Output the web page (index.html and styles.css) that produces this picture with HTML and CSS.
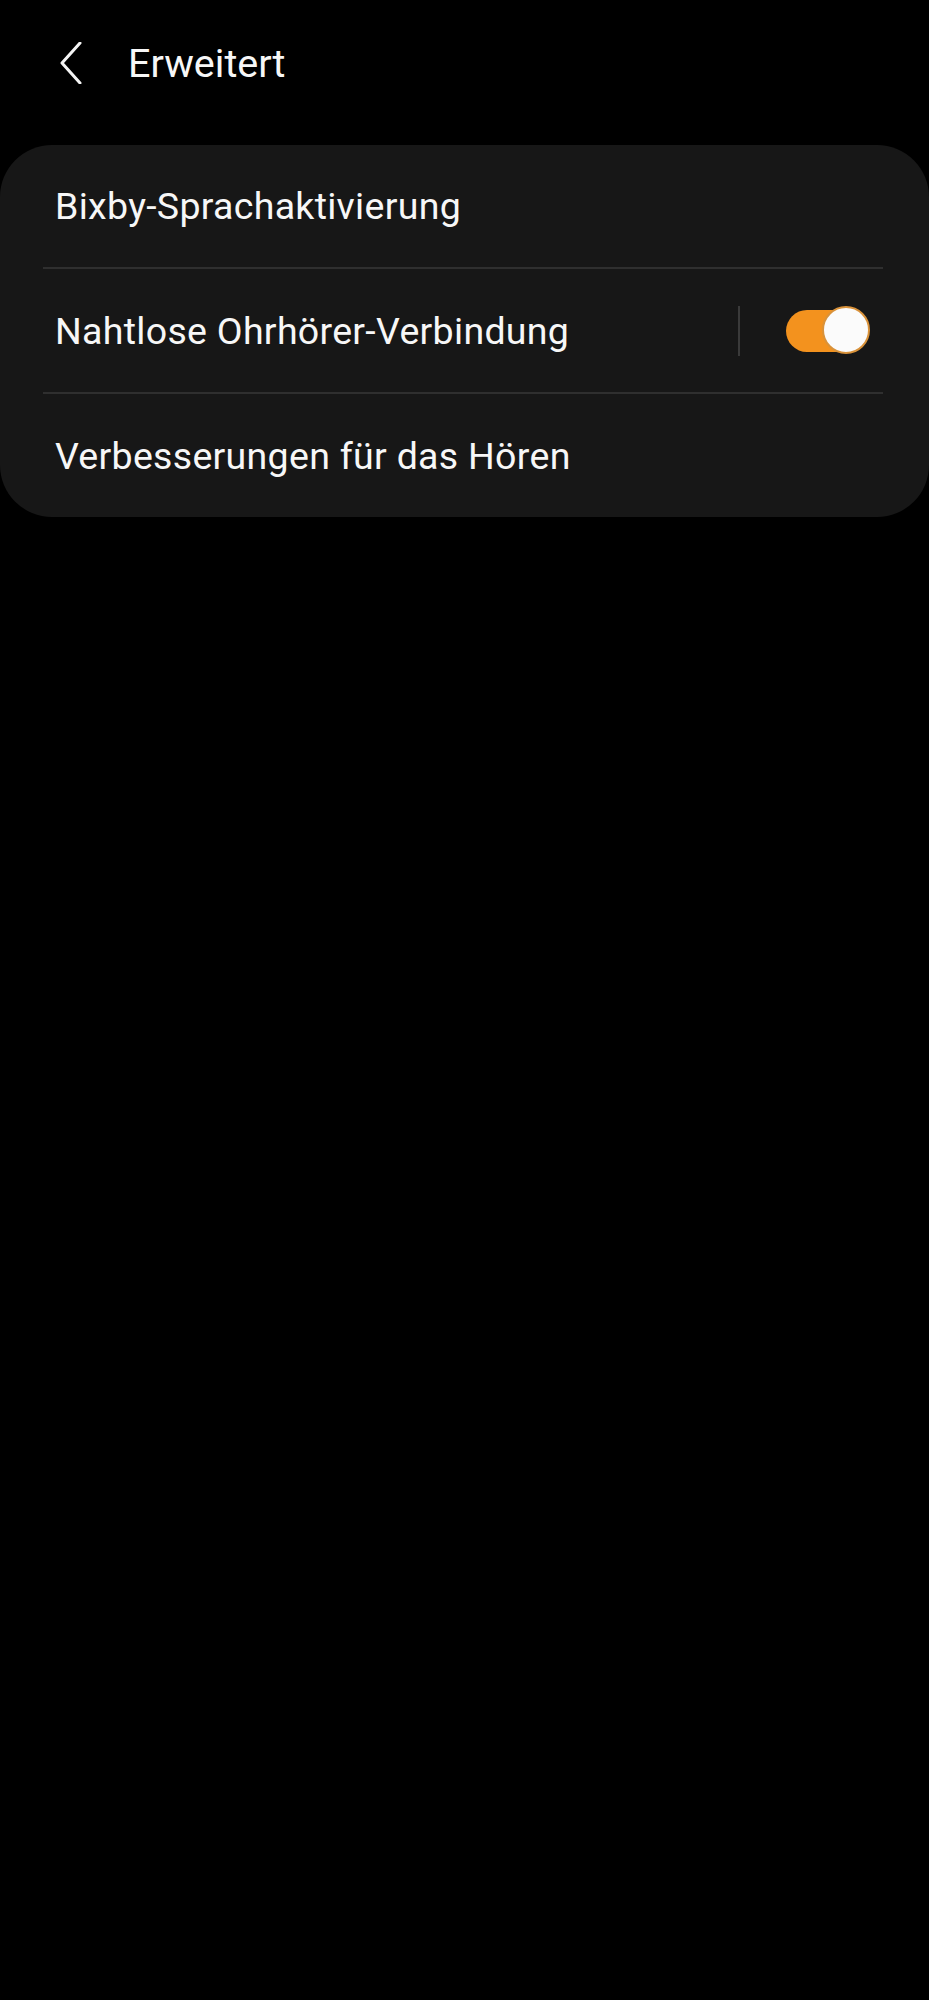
FILE: index.html
```html
<!DOCTYPE html>
<html lang="de">
<head>
<meta charset="utf-8">
<link rel="stylesheet" href="styles.css">
</head>
<body>
<header class="appbar">
  <svg class="back" width="24" height="42" viewBox="0 0 24 42"><path d="M21 1 L3 21 L21 41" fill="none" stroke="#f4f4f4" stroke-width="3" stroke-linecap="round" stroke-linejoin="round"/></svg>
  <h1 class="title">Erweitert</h1>
</header>
<section class="card">
  <div class="row"><span class="label">Bixby-Sprachaktivierung</span></div>
  <div class="sep"></div>
  <div class="row">
    <span class="label">Nahtlose Ohrhörer-Verbindung</span>
    <span class="vbar"></span>
    <span class="switch"><span class="thumb"></span></span>
  </div>
  <div class="sep"></div>
  <div class="row"><span class="label">Verbesserungen für das Hören</span></div>
</section>
</body>
</html>
```
FILE: styles.css
```css
html, body {
  margin: 0;
  padding: 0;
  background: #000;
}
body {
  font-family: Roboto, "Liberation Sans", sans-serif;
  color: #f7f7f7;
  width: 929px;
  min-height: 2000px;
}
.appbar {
  display: flex;
  align-items: center;
  height: 128px;
  padding-left: 59px;
  box-sizing: border-box;
  padding-bottom: 2px;
}
.back {
  display: block;
  flex: none;
}
.title {
  margin: 0 0 0 45px;
  font-weight: 400;
  font-size: 39.5px;
  letter-spacing: 0;
}
.card {
  margin-top: 17px;
  background: #171717;
  border-radius: 52px;
  padding: 0 46px 0 43px;
}
.row {
  display: flex;
  align-items: center;
  height: 123px;
  padding-left: 12px;
}
.row:first-child {
  height: 122px;
}
.label {
  font-size: 37.5px;
  letter-spacing: 0.3px;
  flex: 1;
}
.sep {
  height: 2px;
  background: #2f2f2f;
}
.vbar {
  width: 2px;
  height: 50px;
  background: #3a3a3a;
  margin-right: 46px;
}
.switch {
  position: relative;
  width: 78px;
  height: 42px;
  border-radius: 21px;
  background: #f3921e;
  margin-right: 19px;
}
.thumb {
  position: absolute;
  right: -6px;
  top: -4px;
  width: 48px;
  height: 48px;
  border-radius: 50%;
  background: #fbfbfb;
  border: 2px solid #d9923a;
  box-sizing: border-box;
}
```
